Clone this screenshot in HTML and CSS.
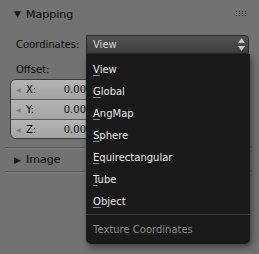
FILE: index.html
```html
<html lang="en">
<head>
    <meta charset="UTF-8">
    <title>Mapping</title>
    <link rel="stylesheet" href="styles.css">
</head>
<body>
    <div class="panel">
        <div class="panel-head">
            <span class="tri">&#9660;</span>Mapping
            <span class="grip">
                <i></i><i></i><i></i><i></i><i></i><i></i><i></i><i></i><i></i><i></i><i></i><i></i>
            </span>
        </div>
        <div class="row">
            <span class="label">Coordinates:</span>
            <div class="select">
                View
                <svg class="updown" width="7" height="13" viewBox="0 0 7 13">
                    <path d="M3.5 0 L7 5 L0 5 Z" fill="#c8c8c8"/>
                    <path d="M0 8 L7 8 L3.5 13 Z" fill="#c8c8c8"/>
                </svg>
            </div>
        </div>
        <div class="label offset">Offset:</div>
        <div class="vector">
            <div class="num"><span class="arrow">&#9664;</span>X:<span class="value">0.00</span></div>
            <div class="num"><span class="arrow">&#9664;</span>Y:<span class="value">0.00</span></div>
            <div class="num"><span class="arrow">&#9664;</span>Z:<span class="value">0.00</span></div>
        </div>
    </div>
    <div class="sep"></div>
    <div class="panel-head closed"><span class="tri">&#9654;</span>Image</div>
    <div class="sep"></div>

    <div class="menu">
        <div class="item"><u>V</u>iew</div>
        <div class="item"><u>G</u>lobal</div>
        <div class="item"><u>A</u>ngMap</div>
        <div class="item"><u>S</u>phere</div>
        <div class="item"><u>E</u>quirectangular</div>
        <div class="item"><u>T</u>ube</div>
        <div class="item"><u>O</u>bject</div>
        <div class="menu-sep"></div>
        <div class="item title">Texture Coordinates</div>
    </div>
</body>
</html>
```

FILE: styles.css
```css
body {
    margin: 0;
    background-color: #727272;
    font-family: "DejaVu Sans", sans-serif;
    font-size: 10px;
    color: #0a0a0a;
    width: 259px;
    height: 254px;
    overflow: hidden;
    position: relative;
}

.panel-head {
    height: 28px;
    display: flex;
    align-items: center;
    padding-left: 14px;
    font-size: 11px;
    color: #050505;
    position: relative;
}

.panel-head .tri {
    font-size: 9px;
    width: 12px;
    color: #1a1a1a;
}

.panel-head.closed {
    height: 23px;
    margin-top: -1px;
}

.grip {
    position: absolute;
    left: 236px;
    top: 11px;
    display: grid;
    grid-template-columns: repeat(4, 1px);
    grid-auto-rows: 1px;
    column-gap: 2px;
    row-gap: 1px;
}

.grip i {
    background-color: #2e2e2e;
}

.row {
    display: flex;
    align-items: center;
    margin-top: 7px;
    padding-left: 16px;
}

.row .label {
    width: 70px;
}

.select {
    width: 155px;
    height: 17px;
    border: 1px solid #2a2a2a;
    border-radius: 1px 4px 0 0;
    background: linear-gradient(#525252, #3e3e3e);
    color: #d4d4d4;
    display: flex;
    align-items: center;
    padding-left: 6px;
    position: relative;
}

.updown {
    position: absolute;
    right: 3px;
    top: 2px;
}

.offset {
    margin-top: 8px;
    padding-left: 16px;
    line-height: 16px;
}

.vector {
    margin: 1px 0 0 10px;
    width: 76px;
    border: 1px solid #3a3a3a;
    border-radius: 6px 0 0 6px;
    background: #a6a6a6;
    overflow: hidden;
}

.num {
    height: 19px;
    display: flex;
    align-items: center;
    padding-left: 5px;
    padding-right: 1px;
    background: linear-gradient(#b4b4b4, #a3a3a3);
    border-top: 1px solid #5a5a5a;
}

.num:first-child {
    border-top: none;
}

.num:last-child {
    height: 18px;
}

.arrow {
    font-size: 6px;
    color: #7a7a7a;
    width: 10px;
}

.value {
    margin-left: auto;
}

.sep {
    margin: 8px 7px 0 6px;
    height: 1px;
    background-color: #595959;
    border-bottom: 1px solid #7c7c7c;
}

.panel-head.closed + .sep {
    margin-top: 0;
}

.menu {
    position: absolute;
    left: 86px;
    top: 54px;
    width: 164px;
    height: 186px;
    padding-top: 4px;
    background-color: #1a1a1a;
    border-radius: 0 0 5px 5px;
    box-shadow: 2px 3px 6px rgba(0, 0, 0, 0.45);
}

.item {
    height: 22px;
    line-height: 23px;
    padding-left: 7px;
    color: #e6e6e6;
}

.item u {
    text-decoration-color: #8a8a8a;
    text-underline-offset: 2px;
}

.menu-sep {
    margin: 2px 0 0 0;
    height: 1px;
    background-color: #3c3c3c;
}

.item.title {
    height: 28px;
    line-height: 29px;
    color: #8a8a8a;
}
```
